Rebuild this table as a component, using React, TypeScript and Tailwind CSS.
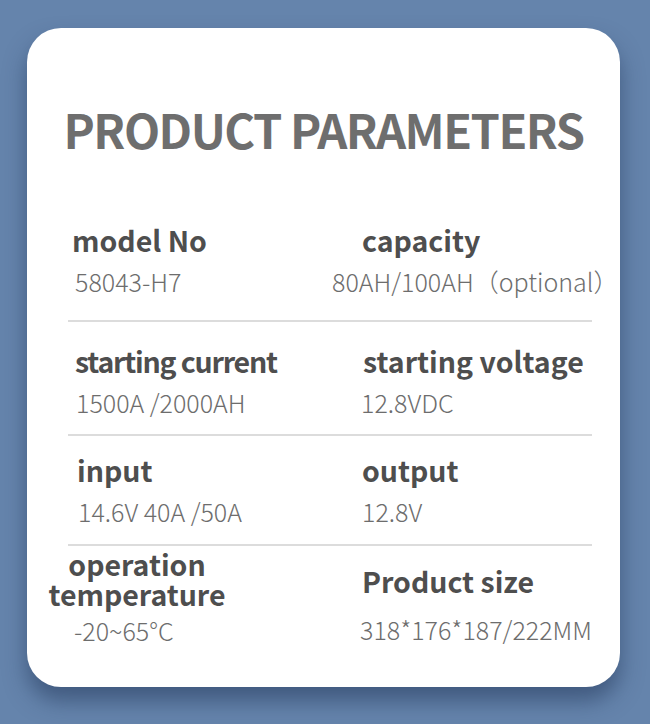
export default function App() {
  const font = { fontFamily: '"Noto Sans CJK SC", "Noto Sans", sans-serif' };

  return (
    <div className="w-[650px] h-[724px] bg-[#6584ac] pt-[28px] pl-[27px]" style={font}>
      <div className="w-[593px] h-[659px] rounded-[34px] bg-white shadow-[0_14px_22px_rgba(35,55,90,0.55)] pt-[76px]">
        {/* Title */}
        <h1 className="text-center text-[47px] leading-[49px] font-bold text-[#6e6e6e] tracking-[-1.5px]">
          PRODUCT PARAMETERS
        </h1>

        <div className="ml-[41px] w-[524px]">
          {/* row 1 */}
          <div className="grid grid-cols-2 h-[169px] border-b-2 border-[#dcdcdc] pt-[70px]">
            <Cell label="model No" value="58043-H7" labelX="ml-[4px]" valueX="ml-[7px]" />
            <Cell label="capacity" value="80AH/100AH（optional）" labelX="ml-[32px]" valueX="ml-[2px]" />
          </div>

          {/* row 2 */}
          <div className="grid grid-cols-2 h-[114px] border-b-2 border-[#dcdcdc] pt-[22px]">
            <Cell label="starting current" value="1500A /2000AH" labelX="ml-[7px] tracking-[-1.2px]" valueX="ml-[8px]" />
            <Cell label="starting voltage" value="12.8VDC" labelX="ml-[33px]" valueX="ml-[31px]" />
          </div>

          {/* row 3 */}
          <div className="grid grid-cols-2 h-[110px] border-b-2 border-[#dcdcdc] pt-[17px]">
            <Cell label="input" value="14.6V 40A /50A" labelX="ml-[9px]" valueX="ml-[10px]" />
            <Cell label="output" value="12.8V" labelX="ml-[32px]" valueX="ml-[32px]" />
          </div>

          {/* row 4 */}
          <div className="grid grid-cols-2">
            <div className="pt-[3px]">
              <div className="-ml-[31px] w-[200px] text-center text-[28.5px] leading-[30px] font-bold text-[#4e4e4e]">
                operation
                <br />
                temperature
              </div>
              <div className="mt-[5px] ml-[6px] text-[25px] leading-[32px] font-light text-[#6d6d6d]">-20~65°C</div>
            </div>
            <div className="pt-[18px]">
              <div className="ml-[32px] text-[28.5px] leading-[34px] font-bold text-[#4e4e4e]">Product size</div>
              <div className="mt-[15px] ml-[30px] text-[25px] leading-[32px] font-light text-[#6d6d6d] whitespace-nowrap">
                318*176*187/222MM
              </div>
            </div>
          </div>
        </div>
      </div>
    </div>
  );
}

function Cell({
  label,
  value,
  labelX,
  valueX,
}: {
  label: string;
  value: string;
  labelX: string;
  valueX: string;
}) {
  return (
    <div>
      <div className={`${labelX} text-[28.5px] leading-[34px] font-bold text-[#4e4e4e] whitespace-nowrap`}>{label}</div>
      <div className={`${valueX} mt-[8px] text-[25px] leading-[32px] font-light text-[#6d6d6d] whitespace-nowrap`}>
        {value}
      </div>
    </div>
  );
}
